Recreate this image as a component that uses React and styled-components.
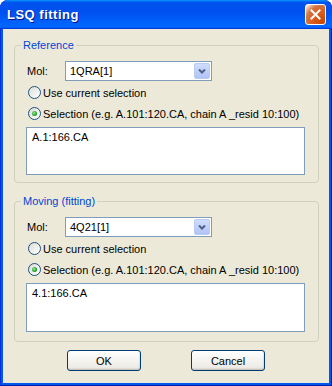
import styled, { createGlobalStyle } from 'styled-components';

const GlobalStyle = createGlobalStyle`
  html, body {
    margin: 0;
    padding: 0;
  }
  body {
    width: 332px;
    height: 386px;
    overflow: hidden;
    font-family: "Liberation Sans", Arial, sans-serif;
    font-size: 11px;
    color: #000;
  }
`;

const Window = styled.div`
  width: 332px;
  height: 386px;
  box-sizing: border-box;
  display: flex;
  flex-direction: column;
  background: #0058ee;
  border-radius: 8px 8px 0 0;
  box-shadow: inset 1px 0 #0831d9, inset -1px 0 #001ea0, inset 0 -1px #001ea0;
  overflow: hidden;
`;

const TitleBar = styled.div`
  height: 29px;
  flex: none;
  display: flex;
  align-items: center;
  justify-content: space-between;
  padding: 0 6px 0 7px;
  border-radius: 8px 8px 0 0;
  background: linear-gradient(180deg, #0997ff, #0053ee 8%, #0050ee 40%, #0066ff 88%, #0066ff 93%, #005bff 95%, #003dd7 96%, #003dd7);
`;

const Title = styled.span`
  color: #fff;
  font-family: "Liberation Sans", Arial, sans-serif;
  font-weight: bold;
  font-size: 13px;
  letter-spacing: 0.5px;
  text-shadow: 1px 1px #0f1089;
`;

const CloseButton = styled.div`
  width: 21px;
  height: 21px;
  box-sizing: border-box;
  border: 1px solid #fff;
  border-radius: 3px;
  display: flex;
  align-items: center;
  justify-content: center;
  background: radial-gradient(circle at 90% 90%, #cc4600 0%, #dc6527 55%, #cd7546 70%, #ffccb2 90%, #fff 100%);
`;

const Client = styled.div`
  flex: 1;
  margin: 0 3px 3px;
  padding: 10px 10px 12px 11px;
  background: #ece9d8;
  display: flex;
  flex-direction: column;
`;

const Group = styled.fieldset`
  margin: ${(p) => (p.$first ? '0' : '12px 0 0')};
  padding: 9px 13px ${(p) => p.$bottom}px 11px;
  border: 1px solid #d0d0bf;
  border-radius: 4px;
  min-width: 0;
`;

const Legend = styled.legend`
  margin-left: -5px;
  padding: 0 2px;
  color: #0046d5;
  font-size: 11px;
  line-height: 13px;
`;

const MolRow = styled.div`
  display: flex;
  align-items: center;
  height: 20px;
`;

const MolLabel = styled.span`
  width: 38px;
  margin-left: 1px;
`;

const Combo = styled.div`
  width: 147px;
  height: 20px;
  box-sizing: border-box;
  border: 1px solid #7f9db9;
  background: #fff;
  display: flex;
  align-items: center;
  justify-content: space-between;
  padding: 1px;
`;

const ComboText = styled.span`
  padding-left: 3px;
`;

const DropButton = styled.div`
  width: 16px;
  height: 100%;
  box-sizing: border-box;
  border: 1px solid #b9cbf3;
  border-radius: 2px;
  background: linear-gradient(180deg, #d0ddfc, #bccdf8 60%, #b0c4f5);
  display: flex;
  align-items: center;
  justify-content: center;
`;

const RadioList = styled.div`
  margin-top: 1px;
  display: flex;
  flex-direction: column;
`;

const RadioRow = styled.label`
  display: flex;
  align-items: center;
  height: 21px;
  white-space: nowrap;
`;

const RadioCircle = styled.span`
  width: 13px;
  height: 13px;
  box-sizing: border-box;
  margin: 0 2px 0 2px;
  border: 1px solid #1c5180;
  border-radius: 50%;
  background: linear-gradient(135deg, #dcdcd7, #fff);
  display: flex;
  align-items: center;
  justify-content: center;

  &::after {
    content: '';
    width: 5px;
    height: 5px;
    border-radius: 50%;
    background: radial-gradient(circle at 40% 40%, #a2e8a2, #21a121 60%, #0a7a0a);
    display: ${(p) => (p.$checked ? 'block' : 'none')};
  }
`;

const SelBox = styled.textarea`
  display: block;
  margin-top: 3px;
  width: 100%;
  height: ${(p) => p.$h}px;
  box-sizing: border-box;
  border: 1px solid #7f9db9;
  padding: 3px 5px;
  font-family: "Liberation Sans", Arial, sans-serif;
  font-size: 11px;
  line-height: 13px;
  resize: none;
  overflow: hidden;
  outline: none;
  color: #000;
`;

const ButtonRow = styled.div`
  margin-top: 8px;
  display: flex;
  justify-content: center;
  gap: 50px;
  padding-right: 1px;
`;

const Button = styled.button`
  width: 74px;
  height: 21px;
  box-sizing: border-box;
  padding: 0;
  border: 1px solid #003c74;
  border-radius: 3px;
  background: linear-gradient(180deg, #fff, #ecebe6 86%, #d6d0c5);
  box-shadow: inset -1px -1px 1px rgba(0, 0, 0, 0.08);
  font-family: "Liberation Sans", Arial, sans-serif;
  font-size: 11px;
  color: #000;
`;

const Chevron = () => (
  <svg width="8" height="5" viewBox="0 0 8 5">
    <path d="M1 0.5 L4 3.5 L7 0.5" fill="none" stroke="#4d6185" strokeWidth="2" />
  </svg>
);

const CloseX = () => (
  <svg width="11" height="11" viewBox="0 0 11 11">
    <path d="M1.5 1.5 L9.5 9.5 M9.5 1.5 L1.5 9.5" stroke="#fff" strokeWidth="2" strokeLinecap="square" />
  </svg>
);

const SelectionGroup = ({ title, mol, value, first, boxHeight, bottom }) => (
  <Group $first={first} $bottom={bottom}>
    <Legend>{title}</Legend>
    <MolRow>
      <MolLabel>Mol:</MolLabel>
      <Combo>
        <ComboText>{mol}</ComboText>
        <DropButton>
          <Chevron />
        </DropButton>
      </Combo>
    </MolRow>
    <RadioList>
      <RadioRow>
        <RadioCircle />
        Use current selection
      </RadioRow>
      <RadioRow>
        <RadioCircle $checked />
        Selection (e.g. A.101:120.CA, chain A _resid 10:100)
      </RadioRow>
    </RadioList>
    <SelBox $h={boxHeight} readOnly value={value} />
  </Group>
);

export default function App() {
  return (
    <>
      <GlobalStyle />
      <Window>
        <TitleBar>
          <Title>LSQ fitting</Title>
          <CloseButton>
            <CloseX />
          </CloseButton>
        </TitleBar>
        <Client>
          <SelectionGroup first title="Reference" mol="1QRA[1]" value="A.1:166.CA" boxHeight={48} bottom={7} />
          <SelectionGroup title="Moving (fitting)" mol="4Q21[1]" value="4.1:166.CA" boxHeight={49} bottom={9} />
          <ButtonRow>
            <Button>OK</Button>
            <Button>Cancel</Button>
          </ButtonRow>
        </Client>
      </Window>
    </>
  );
}
